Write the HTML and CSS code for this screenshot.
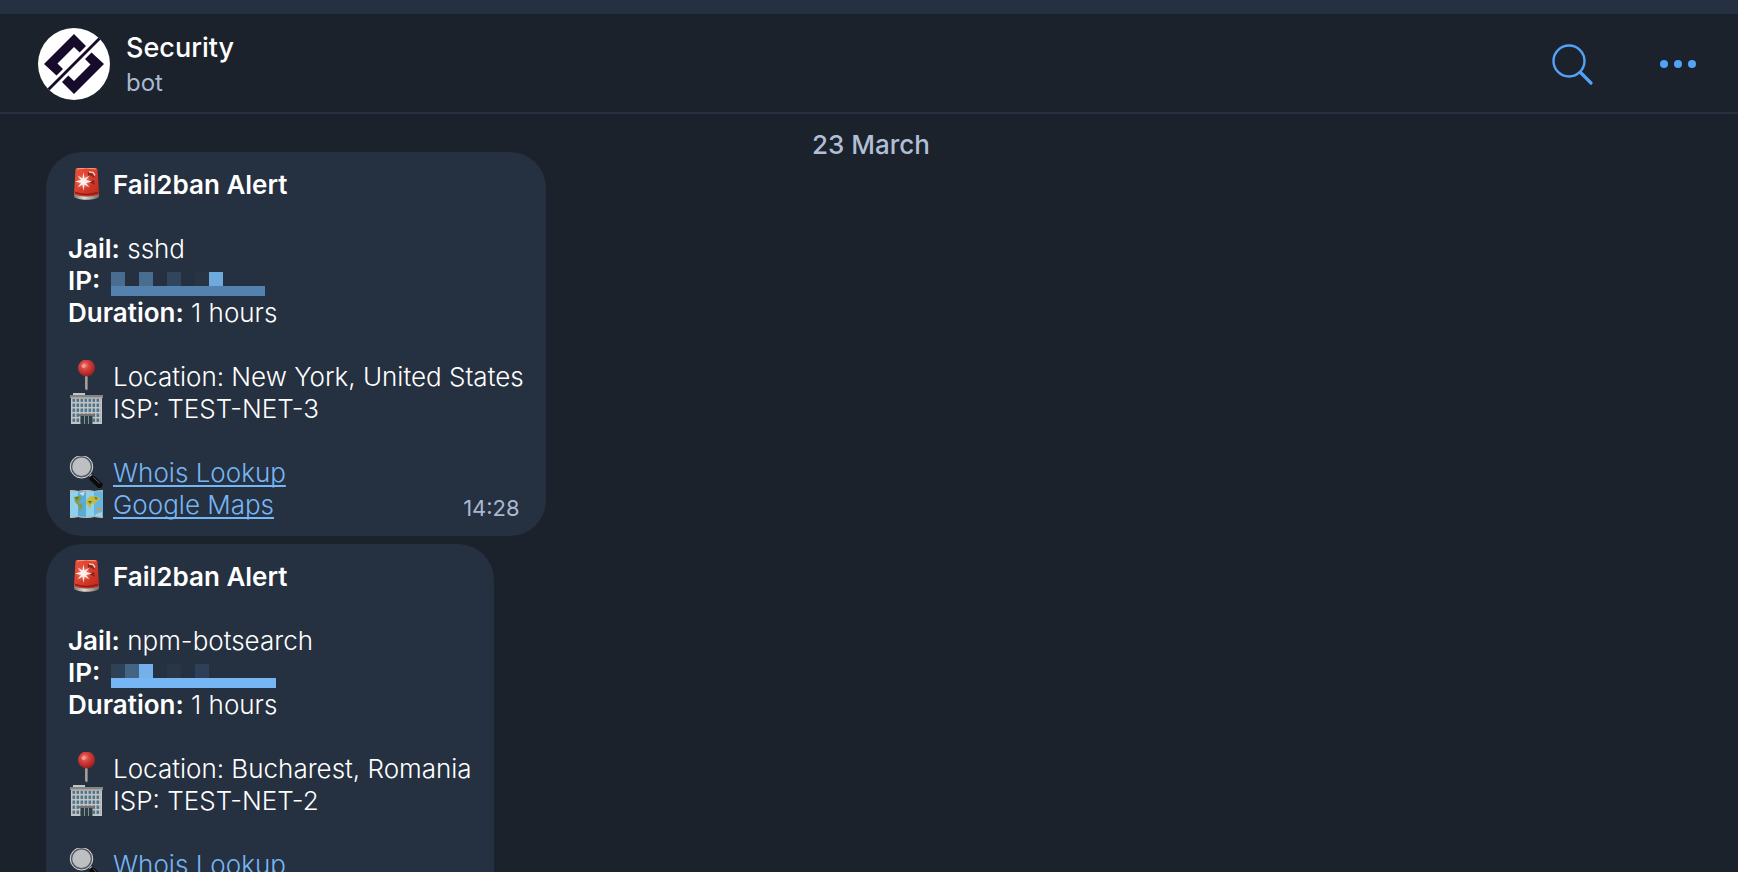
FILE: index.html
```html
<!DOCTYPE html>
<html lang="en">
<head>
    <meta charset="UTF-8">
    <meta name="viewport" content="width=device-width, initial-scale=1.0">
    <title>Security bot</title>
    <link rel="stylesheet" href="styles.css">
</head>
<body>
    <!-- shared icons -->
    <svg class="sprite" aria-hidden="true">
        <defs>
            <linearGradient id="red" x1="0" y1="0" x2="1" y2="1">
                <stop offset="0" stop-color="#f0543c"/>
                <stop offset="1" stop-color="#bd281c"/>
            </linearGradient>
            <linearGradient id="base" x1="0" y1="0" x2="1" y2="0">
                <stop offset="0" stop-color="#77726e"/>
                <stop offset="0.4" stop-color="#dedbd5"/>
                <stop offset="1" stop-color="#6f6a66"/>
            </linearGradient>
            <radialGradient id="ball" cx="0.4" cy="0.35" r="0.65">
                <stop offset="0" stop-color="#f58a83"/>
                <stop offset="0.35" stop-color="#dc4540"/>
                <stop offset="1" stop-color="#9c1f20"/>
            </radialGradient>
            <radialGradient id="flare">
                <stop offset="0" stop-color="#fff"/>
                <stop offset="1" stop-color="#ff9a8a" stop-opacity="0"/>
            </radialGradient>
            <pattern id="windows" x="4" y="6" width="4" height="5" patternUnits="userSpaceOnUse">
                <rect width="4" height="5" fill="#c5c4c2"/>
                <rect x="0.5" y="0.5" width="2.6" height="3.4" fill="#4c7590"/>
            </pattern>
        </defs>
        <symbol id="siren" viewBox="0 0 36 32">
            <path d="M6 25v3c0 5 25 5 25 0v-3z" fill="url(#base)"/>
            <path d="M7.500 1.500Q8-.5 11-.5h15q3 0 3.500 2L31 25.500c-2 4-23 4-25 0z" fill="url(#red)"/>
            <path d="M9 1q9-2 19 0" fill="none" stroke="#ff9b80"/>
            <path d="M7 24.500q11 4 23 0" fill="none" stroke="#901c18" stroke-width="1.500"/>
            <path d="M20 4q6-2 7 3l-1 3q-3-4-6-2zM21 14l5-2 1 5z" fill="#88251f"/>
            <path d="M21 4l4 .500 2 3" fill="none" stroke="#ffc7bb" stroke-width="1.500"/>
            <circle cx="15.500" cy="13.500" r="8" fill="url(#flare)" opacity="0.7"/>
            <path d="M15.500 4l1 6.500 5-3-3.500 4.500 6 1.500-6 1.500 3.500 4.500-5-3-1 6.500-1-6.500-5 3 3.500-4.500-6-1.500 6-1.500-3.500-4.500 5 3z" fill="#fff0ed"/>
        </symbol>
        <symbol id="pin" viewBox="0 0 36 32">
            <path d="M17.200 15h2.600v14q-1.300 2.500-2.600 0z" fill="#8f8581"/>
            <path d="M18 16v13" stroke="#c5bcb7"/>
            <circle cx="18.500" cy="8" r="8.500" fill="url(#ball)"/>
            <circle cx="15.500" cy="6" r="2" fill="#f8aaa3" opacity="0.700"/>
        </symbol>
        <symbol id="building" viewBox="0 0 36 32">
            <path d="M5 1h12v2H5z" fill="#c2c4c8"/>
            <path d="M2 3h33v3H2z" fill="#858484"/>
            <path d="M3 5.500h31V32H3z" fill="#c5c4c2"/>
            <path d="M4 6.500h28.500v24H4z" fill="url(#windows)"/>
            <path d="M3 6h31" stroke="#a4a3a1"/>
            <path d="M11 22h15v2H11z" fill="#77706c"/>
            <path d="M12.500 24h12v8h-12z" fill="#2b3d46"/>
            <path d="M16.500 24v8M20.500 24v8" stroke="#8b8d8c"/>
        </symbol>
        <symbol id="glass" viewBox="0 0 36 32">
            <path d="M22 19l4 4" stroke="#aaa9a7" stroke-width="3"/>
            <path d="M24.500 22.500l7 6.500" stroke="#090b0e" stroke-width="6" stroke-linecap="round"/>
            <path d="M25.500 21.500l6 5.500" stroke="#5e6164" stroke-width="1" stroke-linecap="round"/>
            <circle cx="13.500" cy="10.800" r="10.500" fill="#bdc0c3" stroke="#555a60" stroke-width="2.500"/>
            <circle cx="13.500" cy="10.800" r="11.200" fill="none" stroke="#d7dadd" stroke-width="1"/>
        </symbol>
        <symbol id="map" viewBox="0 0 36 32">
            <path d="M2 2l8 1 8-1 8 1 9-1v28l-9-1-8 1-8-1-8 1z" fill="#65b7e2"/>
            <path d="M2 2l8 1v26l-8 1zM18 2l8 1v26l-8 1z" fill="#91d0ed"/>
            <path d="M10 3l8-1v28l-8-1z" fill="#57acd9"/>
            <path d="M2 2l8 1 8-1 8 1 9-1v1.500H2zM2 29l8-1 8 1 8-1 9 1v1l-9-1-8 1-8-1-8 1z" fill="#c3b79f"/>
            <path d="M6 9l5-1 3 2-2 2-2 3 3 1 2 2-2 3-1 3-1-4-1-3-3-3z" fill="#8a9a3c"/>
            <path d="M19 11l4-3 7 1 3 2-4 2-2 3-2-1-2 2-1 4-2-4-2-2z" fill="#c9b93a"/>
            <path d="M20 13l4 0-2 3zM26 9l4 1-2 2zM7 9l4 0-2 3z" fill="#4f7c3c"/>
            <path d="M29 20l4 0-1 3-3-1z" fill="#d39b3b"/>
            <path d="M11 5l6-1-2 4z" fill="#d3dedb"/>
            <path d="M28 26l6-2v5l-7-1z" fill="#d8dfdf" opacity="0.600"/>
        </symbol>
    </svg>

    <div class="top-strip"></div>
    <header class="header">
        <svg class="avatar" viewBox="0 0 72 72" role="img" aria-label="Security avatar">
            <circle cx="36" cy="36" r="36" fill="#fff"/>
            <g fill="#160b2b">
                <path d="M36 6l12 12-6.300 6.500-5.700-5.500-16.500 16.500 5.500 5.500-6.500 6.500L6 36z"/>
                <path d="M36 66L24 54l6.300-6.500 5.700 5.500 16.500-16.500-5.500-5.500 6.500-6.500L66 36z"/>
            </g>
            <path d="M61.500 10.500l-51 51" stroke="#160b2b" stroke-width="2.800"/>
        </svg>
        <div class="peer">
            <h1>Security</h1>
            <p>bot</p>
        </div>
        <button class="icon-button" type="button" aria-label="Search">
            <svg width="44" height="44" viewBox="0 0 44 44" fill="none" stroke="#53a2f9" stroke-linecap="round">
                <circle cx="19" cy="19" r="15.500" stroke-width="2.400"/>
                <path d="M30.500 30.500L41 41" stroke-width="3.200"/>
            </svg>
        </button>
        <button class="icon-button" type="button" aria-label="More">
            <svg width="36" height="8" viewBox="0 0 36 8" fill="#53a2f9">
                <circle cx="4" cy="4" r="4"/>
                <circle cx="18" cy="4" r="4"/>
                <circle cx="32" cy="4" r="4"/>
            </svg>
        </button>
    </header>

    <main class="chat">
        <div class="date">23 March</div>

        <article class="message">
            <h2 class="line"><svg class="emoji"><use href="#siren"/></svg>Fail2ban Alert</h2>
            <div class="group">
                <div class="line"><b>Jail:</b>&nbsp;sshd</div>
                <div class="line"><b>IP:</b>
                    <svg class="redacted" width="154" height="24" shape-rendering="crispEdges" role="img" aria-label="Hidden address">
                        <path d="M0 0h14v14H0zM28 0h14v14H28z" fill="#496d8f"/>
                        <path d="M56 0h14v14H56z" fill="#31455c"/>
                        <path d="M84 0h14v14H84z" fill="#293442"/>
                        <path d="M98 0h14v14H98z" fill="#6faade"/>
                        <path d="M0 14h154v10H0z" fill="#5482af"/>
                    </svg>
                </div>
                <div class="line"><b>Duration:</b>&nbsp;1 hours</div>
            </div>
            <div class="group">
                <div class="line"><svg class="emoji"><use href="#pin"/></svg>Location: New York, United States</div>
                <div class="line"><svg class="emoji"><use href="#building"/></svg>ISP: TEST-NET-3</div>
            </div>
            <div class="group">
                <div class="line"><svg class="emoji"><use href="#glass"/></svg><a href="#">Whois Lookup</a></div>
                <div class="line"><svg class="emoji"><use href="#map"/></svg><a href="#">Google Maps</a><time>14:28</time></div>
            </div>
        </article>

        <article class="message">
            <h2 class="line"><svg class="emoji"><use href="#siren"/></svg>Fail2ban Alert</h2>
            <div class="group">
                <div class="line"><b>Jail:</b>&nbsp;npm-botsearch</div>
                <div class="line"><b>IP:</b>
                    <svg class="redacted" width="165" height="24" shape-rendering="crispEdges" role="img" aria-label="Hidden address">
                        <path d="M0 0h14v14H0z" fill="#2d4257"/>
                        <path d="M14 0h14v14H14z" fill="#446484"/>
                        <path d="M28 0h14v14H28z" fill="#74b1ec"/>
                        <path d="M56 0h14v14H56z" fill="#273748"/>
                        <path d="M84 0h14v14H84z" fill="#2d4058"/>
                        <path d="M0 14h165v10H0z" fill="#76b6f4"/>
                    </svg>
                </div>
                <div class="line"><b>Duration:</b>&nbsp;1 hours</div>
            </div>
            <div class="group">
                <div class="line"><svg class="emoji"><use href="#pin"/></svg>Location: Bucharest, Romania</div>
                <div class="line"><svg class="emoji"><use href="#building"/></svg>ISP: TEST-NET-2</div>
            </div>
            <div class="group">
                <div class="line"><svg class="emoji"><use href="#glass"/></svg><a href="#">Whois Lookup</a></div>
                <div class="line"><svg class="emoji"><use href="#map"/></svg><a href="#">Google Maps</a></div>
            </div>
        </article>
    </main>
</body>
</html>
```
FILE: styles.css
```css
* {
    box-sizing: border-box;
}

body {
    display: flex;
    flex-direction: column;
    height: 100vh;
    margin: 0;
    overflow: hidden;
    background: #1b222b;
    color: #fff;
    font-family: Inter, "Liberation Sans", sans-serif;
    font-size: 26px;
    line-height: 32px;
}

h1, h2, p {
    margin: 0;
}

.sprite {
    position: absolute;
    width: 0;
    height: 0;
}

.top-strip {
    flex: none;
    height: 14px;
    background: #253040;
}

/* header */
.header {
    flex: none;
    display: flex;
    align-items: center;
    gap: 16px;
    padding: 14px 42px 12px 38px;
    border-bottom: 2px solid #253040;
}

.avatar {
    width: 72px;
    height: 72px;
}

.peer {
    flex: 1;
    padding-top: 2px;
}

.peer h1 {
    font-size: 27px;
    font-weight: 500;
    line-height: 35px;
}

.peer p {
    color: #a9b8d0;
    font-size: 24px;
    line-height: 35px;
}

.icon-button {
    display: flex;
    padding: 0;
    border: none;
    background: none;
    cursor: pointer;
}

.icon-button + .icon-button {
    margin-left: 50px;
}

/* messages */
.chat {
    flex: 1;
    position: relative;
    display: flex;
    flex-direction: column;
    align-items: flex-start;
    gap: 8px;
    min-height: 0;
    padding: 38px 46px 0;
    overflow: hidden;
}

/* floats above the message list */
.date {
    position: absolute;
    top: 15px;
    left: 4px;
    right: 0;
    color: #b0bfd6;
    font-weight: 500;
    text-align: center;
}

.message {
    flex: none;
    display: flex;
    flex-direction: column;
    gap: 32px;
    padding: 16px 22px;
    border-radius: 36px;
    background: #253040;
    font-weight: 350;
}

.line {
    display: flex;
    align-items: center;
    height: 32px;
    padding-top: 2px;
    white-space: nowrap;
}

h2.line {
    font-size: 26px;
    font-weight: 600;
}

.line b {
    font-weight: 600;
}

.emoji {
    flex: none;
    align-self: flex-end;
    width: 36px;
    height: 32px;
    margin-right: 9px;
    overflow: visible;
}

.redacted {
    align-self: flex-end;
    margin-left: 11px;
}

a {
    color: #76b6f4;
    text-decoration: underline;
    text-decoration-thickness: 2px;
    text-underline-offset: 3px;
    text-decoration-skip-ink: none;
}

time {
    margin: 6px 4px 0 auto;
    color: #a9b8d0;
    font-size: 22px;
    font-weight: 400;
}
```
